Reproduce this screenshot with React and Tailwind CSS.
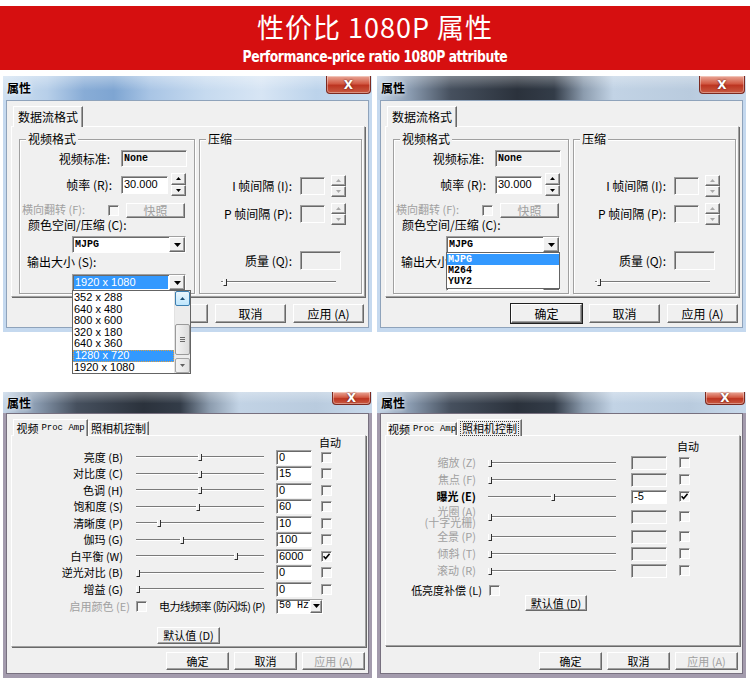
import React from 'react';

// shared font stacks and classic 3D edge styles
const cjk = "font-['Noto_Sans_CJK_SC',sans-serif]";
const mono = "font-['Liberation_Mono',monospace]";
const sans = "font-['Liberation_Sans',sans-serif]";

const raised =
  'border border-t-white border-l-white border-r-[#696969] border-b-[#696969] shadow-[inset_-1px_-1px_0_#a0a0a0] bg-[#f0f0f0]';
const sunken =
  'border border-t-[#a0a0a0] border-l-[#a0a0a0] border-r-white border-b-white shadow-[inset_1px_1px_0_#696969]';

const glassLight =
  'bg-[linear-gradient(180deg,rgba(255,255,255,0.35),rgba(255,255,255,0)_60%),linear-gradient(90deg,#cfe0f1_0%,#b7cfe9_12%,#88acd6_22%,#7ea5d2_30%,#a9c5e5_40%,#c6daef_55%,#d7e5f4_70%,#bcd3eb_85%,#c8dcf0_100%)]';
const glassDark =
  'bg-[linear-gradient(180deg,rgba(255,255,255,0.3),rgba(255,255,255,0)_55%),linear-gradient(90deg,#c5d6e8_0%,#8a9bb0_9%,#46505e_20%,#2b323c_38%,#333c48_48%,#8c9cae_56%,#c2d3e5_64%,#b9cbde_85%,#c8d9eb_100%)]';

function Tri({ up, color = '#000000', w = 7, h = 4 }) {
  const pts = up ? `0,${h} ${w},${h} ${w / 2},0` : `0,0 ${w},0 ${w / 2},${h}`;
  return (
    <svg width={w} height={h} viewBox={`0 0 ${w} ${h}`}>
      <polygon points={pts} fill={color} />
    </svg>
  );
}

function CloseButton({ size }) {
  return (
    <div
      className={`${size} rounded-b-[4px] border border-t-0 border-[#7c2a20] bg-[linear-gradient(#eaa898,#d25a44_45%,#bd3521_55%,#c85a42)] shadow-[inset_0_0_0_1px_rgba(255,255,255,0.35)] flex items-center justify-center`}
    >
      <span className="text-white font-bold text-[12px] leading-none font-['DejaVu_Sans',sans-serif] [text-shadow:0_0_2px_#4a140c]">
        X
      </span>
    </div>
  );
}

function Window({ glass, titleH, closeSize, frame, edge, height, children }) {
  return (
    <div className={`w-[369px] ${height} flex flex-col`}>
      <div className={`${titleH} ${glass} flex items-start justify-between pr-[1px]`}>
        <span className="self-center pl-[4px] text-[12px] leading-none font-bold text-black [text-shadow:0_0_4px_white]">
          属性
        </span>
        <CloseButton size={closeSize} />
      </div>
      <div className={`flex-1 flex flex-col border-x-[3px] border-b-[4px] ${frame}`}>
        <div className={`flex-1 flex flex-col border ${edge} bg-[#f0f0f0]`}>{children}</div>
      </div>
    </div>
  );
}

function Tab({ active, size, children }) {
  return (
    <div
      className={`${size} flex items-center justify-center whitespace-nowrap bg-[#f0f0f0] border-t border-l border-r border-t-white border-l-white border-r-[#696969] shadow-[inset_-1px_0_0_#a0a0a0] ${
        active ? 'relative z-10 -mb-px' : ''
      }`}
    >
      {children}
    </div>
  );
}

const page =
  'border border-t-white border-l-white border-r-[#a0a0a0] border-b-[#a0a0a0] shadow-[1px_1px_0_#696969] bg-[#f0f0f0]';

function Group({ title, size, children }) {
  return (
    <fieldset
      className={`${size} min-w-0 border border-[#a0a0a0] shadow-[inset_1px_1px_0_white,1px_1px_0_white]`}
    >
      <legend className="ml-[6px] px-[2px] h-[12px] leading-[12px] bg-[#f0f0f0]">{title}</legend>
      {children}
    </fieldset>
  );
}

function Btn({ size, disabled, def, children }) {
  return (
    <div
      className={`${size} ${raised} flex items-center justify-center leading-none ${
        def ? 'outline outline-1 outline-[#202020]' : ''
      } ${disabled ? 'text-[#a0a0a0]' : 'text-black'}`}
    >
      {children}
    </div>
  );
}

function Check({ checked }) {
  return (
    <div className={`w-[11px] h-[11px] shrink-0 ${sunken} bg-[#f7f7f7] flex items-center justify-center`}>
      {checked && (
        <svg width="7" height="7" viewBox="0 0 7 7">
          <path d="M0.5 3.2 L2.6 5.6 L6.6 0.8" stroke="#000" strokeWidth="1.6" fill="none" />
        </svg>
      )}
    </div>
  );
}

function Spin({ size, disabled }) {
  const c = disabled ? '#a8a8a8' : '#000000';
  return (
    <div className={`${size} flex flex-col`}>
      <div className={`flex-1 ${raised} flex items-center justify-center`}>
        <Tri up color={c} w={5} h={3} />
      </div>
      <div className={`flex-1 ${raised} flex items-center justify-center`}>
        <Tri color={c} w={5} h={3} />
      </div>
    </div>
  );
}

function Slider({ size, pos }) {
  return (
    <div className={`relative ${size} flex items-center`}>
      <div className="w-full h-[2px] border-t border-b border-t-[#7a7a7a] border-b-white" />
      <div
        className="absolute top-[1px] w-[4px] h-[7px] border-l border-r border-b border-l-white border-r-[#303030] border-b-[#303030] bg-[#f0f0f0]"
        style={{ left: pos }}
      />
    </div>
  );
}

function Combo({ size, text, textCls, selected, btnW = 'w-[16px]', children }) {
  return (
    <div className={`relative ${size} ${sunken} bg-white flex`}>
      <div className="flex-1 flex p-[1px]">
        <div
          className={`w-full flex items-center pl-[1px] whitespace-pre ${textCls} ${
            selected ? 'bg-[#3399ff] text-white' : 'text-black'
          }`}
        >
          {text}
        </div>
      </div>
      <div className={`${btnW} ${raised} flex items-center justify-center`}>
        <Tri />
      </div>
      {children}
    </div>
  );
}

const sizes = ['352 x 288', '640 x 480', '800 x 600', '320 x 180', '640 x 360', '1280 x 720', '1920 x 1080'];

function SizeList() {
  return (
    <div className="absolute left-[-1px] top-full z-20 w-[119px] h-[84px] bg-white border border-[#646464] flex">
      <div className="flex-1 flex flex-col pt-[1px]">
        {sizes.map((s) => (
          <div
            key={s}
            className={`h-[12px] flex items-center pl-[1px] whitespace-pre ${sans} text-[11px] leading-none ${
              s === '1280 x 720'
                ? 'bg-[#3399ff] text-white border border-dotted border-[#e0a040]'
                : 'text-black'
            }`}
          >
            {s}
          </div>
        ))}
      </div>
      <div className="w-[16px] flex flex-col bg-[#ececec] border-l border-[#e2e2e2]">
        <div className="h-[15px] rounded-[2px] border border-[#3c7fb1] bg-[linear-gradient(#eaf6fd,#bee6fd)] flex items-center justify-center">
          <Tri up color="#1c4f75" w={5} h={3} />
        </div>
        <div className="h-[18px]" />
        <div className="h-[31px] rounded-[2px] border border-[#9a9a9a] bg-[linear-gradient(90deg,#f4f4f4,#dcdcdc)] flex items-center justify-center">
          <div className="flex flex-col gap-[1px]">
            <div className="w-[5px] h-px bg-[#6a6a6a]" />
            <div className="w-[5px] h-px bg-[#6a6a6a]" />
            <div className="w-[5px] h-px bg-[#6a6a6a]" />
          </div>
        </div>
        <div className="h-[3px]" />
        <div className="h-[15px] rounded-[2px] border border-[#a5a5a5] bg-[linear-gradient(90deg,#f4f4f4,#e0e0e0)] flex items-center justify-center">
          <Tri color="#606060" w={5} h={3} />
        </div>
      </div>
    </div>
  );
}

function CodecList() {
  return (
    <div className="absolute left-[-1px] top-full z-20 w-[114px] h-[37px] bg-white border border-[#646464] flex flex-col pt-[1px]">
      {['MJPG', 'M264', 'YUY2'].map((c) => (
        <div
          key={c}
          className={`h-[11.5px] flex items-center pl-[1px] ${mono} text-[10px] font-bold leading-none ${
            c === 'MJPG' ? 'bg-[#3399ff] text-white' : 'text-black'
          }`}
        >
          {c}
        </div>
      ))}
    </div>
  );
}

function StreamDialog({ glass, closeSize, open }) {
  const codecOpen = open === 'codec';
  return (
    <Window
      glass={glass}
      titleH="h-[24px]"
      closeSize={closeSize}
      frame="border-[#c5d9ef]"
      edge="border-[#8fa3bb]"
      height="h-[256px]"
    >
      <div className="flex flex-col pl-[4px] pt-[5px] text-[12px] leading-none">
        <div className="flex items-end h-[20px] pl-[2px]">
          <Tab active size="w-[70px] h-[21px]">
            数据流格式
          </Tab>
        </div>
        <div className={`${page} w-[354px] h-[171px] flex gap-[4px] pl-[7px] pt-[6px]`}>
          <Group title="视频格式" size="w-[176px] h-[161px]">
            <div className="flex flex-col">
              <div className="flex items-center h-[17px] mt-[5px]">
                <span className="w-[90px] text-right">视频标准:</span>
                <div
                  className={`ml-[11px] w-[66px] h-[17px] ${sunken} bg-[#f0f0f0] flex items-center pl-[2px] ${mono} text-[10px] font-bold`}
                >
                  None
                </div>
              </div>
              <div className="flex items-center h-[23px] mt-[6px]">
                <span className="w-[92px] text-right">帧率 (R):</span>
                <div
                  className={`ml-[9px] w-[47px] h-[18px] ${sunken} bg-white flex items-center pl-[2px] ${sans} text-[11px]`}
                >
                  30.000
                </div>
                <Spin size="ml-[3px] w-[15px] h-[23px]" />
              </div>
              <div className="flex items-start h-[15px] mt-[7px]">
                <span className="pl-[2px] w-[86px] h-[12px] whitespace-nowrap text-[11px] leading-[12px] text-[#a0a0a0]">
                  横向翻转 (F):
                </span>
                <div className="ml-[2px] mt-[2px]">
                  <Check />
                </div>
                <Btn size="ml-[7px] w-[59px] h-[15px]" disabled>
                  快照
                </Btn>
              </div>
              <div className="mt-[1px] h-[12px] pl-[8px] whitespace-nowrap">颜色空间/压缩 (C):</div>
              <div className="mt-[5px] pl-[52px]">
                <Combo size="w-[114px] h-[17px]" text="MJPG" textCls={`${mono} text-[10px] font-bold`}>
                  {codecOpen && <CodecList />}
                </Combo>
              </div>
              <div className="mt-[3px] h-[12px] pl-[7px] whitespace-nowrap">
                {codecOpen ? '输出大小' : '输出大小 (S):'}
              </div>
              <div className="mt-[6px] pl-[52px]">
                <Combo
                  size="w-[114px] h-[17px]"
                  text={codecOpen ? '' : '1920 x 1080'}
                  textCls={`${sans} text-[11px]`}
                  selected={open === 'size'}
                >
                  {open === 'size' && <SizeList />}
                </Combo>
              </div>
            </div>
          </Group>
          <Group title="压缩" size="w-[163px] h-[161px]">
            <div className="flex flex-col">
              {['I 帧间隔 (I):', 'P 帧间隔 (P):'].map((t, i) => (
                <div key={t} className={`flex items-center h-[22px] ${i === 0 ? 'mt-[30px]' : 'mt-[6px]'}`}>
                  <span className="ml-[20px] w-[72px] text-right whitespace-nowrap">{t}</span>
                  <div className={`ml-[8px] w-[25px] h-[18px] ${sunken} bg-[#f0f0f0]`} />
                  <Spin size="ml-[6px] w-[15px] h-[22px]" disabled />
                </div>
              ))}
              <div className="flex items-center h-[19px] mt-[26px]">
                <span className="ml-[20px] w-[72px] text-right whitespace-nowrap">质量 (Q):</span>
                <div className={`ml-[8px] w-[41px] h-[19px] ${sunken} bg-[#f0f0f0]`} />
              </div>
              <div className="mt-[8px] pl-[21px]">
                <Slider size="w-[115px] h-[8px]" pos={2} />
              </div>
            </div>
          </Group>
        </div>
        <div className="w-[354px] flex justify-end gap-[7px] pr-[1px] mt-[7px]">
          <Btn size="w-[71px] h-[19px]" def={codecOpen}>
            确定
          </Btn>
          <Btn size="w-[71px] h-[19px]">取消</Btn>
          <Btn size="w-[71px] h-[19px]">应用 (A)</Btn>
        </div>
      </div>
    </Window>
  );
}

const procRows = [
  { label: '亮度 (B)', pos: 62, value: '0' },
  { label: '对比度 (C)', pos: 62, value: '15' },
  { label: '色调 (H)', pos: 62, value: '0' },
  { label: '饱和度 (S)', pos: 60, value: '60' },
  { label: '清晰度 (P)', pos: 21, value: '10' },
  { label: '伽玛 (G)', pos: 44, value: '100' },
  { label: '白平衡 (W)', pos: 98, value: '6000', checked: true },
  { label: '逆光对比 (B)', pos: 0, value: '0' },
  { label: '增益 (G)', pos: 0, value: '0' },
];

function ProcAmpDialog() {
  return (
    <Window
      glass={glassDark}
      titleH="h-[21px]"
      closeSize="w-[39px] h-[13px]"
      frame="border-[#a39bad]"
      edge="border-[#77707f]"
      height="h-[286px]"
    >
      <div className="flex flex-col pl-[4px] pt-[5px] text-[11px] leading-none">
        <div className="flex items-end h-[16px] pl-[2px]">
          <Tab active size="w-[75px] h-[17px]">
            视频 <span className={`${mono} text-[9px] ml-[3px]`}>Proc Amp</span>
          </Tab>
          <Tab size="w-[61px] h-[14px]">照相机控制</Tab>
        </div>
        <div className={`${page} w-[355px] h-[212px] flex flex-col`}>
          <div className="mt-[1px] h-[12px] pl-[307px]">自动</div>
          {procRows.map((r) => (
            <div key={r.label} className="h-[16.5px] flex items-center">
              <span className="w-[111px] text-right whitespace-nowrap">{r.label}</span>
              <Slider size="ml-[13px] w-[128px] h-[8px]" pos={r.pos} />
              <div
                className={`ml-[12px] w-[36px] h-[15px] ${sunken} bg-white flex items-center pl-[2px] ${sans} text-[11px]`}
              >
                {r.value}
              </div>
              <div className="ml-[9px]">
                <Check checked={r.checked} />
              </div>
            </div>
          ))}
          <div className="h-[17px] flex items-center">
            <span className="w-[118px] text-right whitespace-nowrap text-[#a0a0a0]">启用颜色 (E)</span>
            <div className="ml-[6px]">
              <Check />
            </div>
            <span className="ml-[12px] w-[117px] whitespace-nowrap tracking-[-0.6px]">电力线频率 (防闪烁) (P)</span>
            <Combo size="w-[47px] h-[15px]" text="50 Hz" textCls={`${mono} text-[10px]`} btnW="w-[14px]" />
          </div>
          <div className="mt-[12px] ml-[145px]">
            <Btn size="w-[63px] h-[17px]">默认值 (D)</Btn>
          </div>
        </div>
        <div className="w-[355px] flex justify-end gap-[5px] pr-[1px] mt-[5px]">
          <Btn size="w-[63px] h-[18px]">确定</Btn>
          <Btn size="w-[63px] h-[18px]">取消</Btn>
          <Btn size="w-[63px] h-[18px]" disabled>
            应用 (A)
          </Btn>
        </div>
      </div>
    </Window>
  );
}

const camRows = [
  { label: '缩放 (Z)', pos: 0 },
  { label: '焦点 (F)', pos: 0 },
  { label: '曝光 (E)', pos: 63, value: '-5', checked: true, on: true },
  { label: '光圈 (A)\n(十字光栅)', tall: true, pos: 0 },
  { label: '全景 (P)', pos: 0 },
  { label: '倾斜 (T)', pos: 0 },
  { label: '滚动 (R)', pos: 0 },
];

function CameraDialog() {
  return (
    <Window
      glass={glassDark}
      titleH="h-[21px]"
      closeSize="w-[40px] h-[13px]"
      frame="border-[#a39bad]"
      edge="border-[#77707f]"
      height="h-[286px]"
    >
      <div className="flex flex-col pl-[4px] pt-[5px] text-[11px] leading-none">
        <div className="flex items-end h-[16px] pl-[2px]">
          <Tab size="w-[70px] h-[13px]">
            视频 <span className={`${mono} text-[9px] ml-[3px]`}>Proc Amp</span>
          </Tab>
          <Tab active size="w-[65px] h-[17px]">
            <span className="px-[1px] py-[1px] border border-dotted border-[#404040]">照相机控制</span>
          </Tab>
        </div>
        <div className={`${page} w-[355px] h-[211px] flex flex-col`}>
          <div className="mt-[5px] h-[12px] pl-[291px]">自动</div>
          <div className="mt-[1px]" />
          {camRows.map((r) => (
            <div key={r.label} className={`${r.tall ? 'h-[23px]' : 'h-[17px]'} flex items-center`}>
              <span
                className={`w-[90px] text-right ${
                  r.tall ? 'whitespace-pre-line leading-[11px]' : 'whitespace-nowrap'
                } ${r.on ? 'text-black font-bold' : 'text-[#a0a0a0]'}`}
              >
                {r.label}
              </span>
              <Slider size="ml-[12px] w-[128px] h-[8px]" pos={r.pos} />
              <div
                className={`ml-[15px] w-[36px] h-[14px] ${sunken} ${
                  r.on ? 'bg-white' : 'bg-[#f0f0f0]'
                } flex items-center pl-[2px] ${sans} text-[11px]`}
              >
                {r.value}
              </div>
              <div className="ml-[12px]">
                <Check checked={r.checked} />
              </div>
            </div>
          ))}
          <div className="mt-[4px] h-[14px] flex items-center">
            <span className="w-[96px] text-right whitespace-nowrap">低亮度补偿 (L)</span>
            <div className="ml-[7px]">
              <Check />
            </div>
          </div>
          <div className="-mt-[2px] ml-[139px]">
            <Btn size="w-[62px] h-[16px]">默认值 (D)</Btn>
          </div>
        </div>
        <div className="w-[355px] flex justify-end gap-[5px] pr-[2px] mt-[6px]">
          <Btn size="w-[63px] h-[18px]">确定</Btn>
          <Btn size="w-[63px] h-[18px]">取消</Btn>
          <Btn size="w-[63px] h-[18px]" disabled>
            应用 (A)
          </Btn>
        </div>
      </div>
    </Window>
  );
}

function Header() {
  return (
    <div className="pt-[6px]">
      <div className="h-[64px] bg-[#d60f10] flex flex-col items-center text-white overflow-hidden">
        <div className={`mt-[6px] h-[29px] text-[27px] leading-[29px] tracking-[1px] ${cjk} whitespace-nowrap`}>
          性价比 1080P 属性
        </div>
        <div className="mt-[8px] h-[16px] text-[16px] leading-[16px] font-bold font-['DejaVu_Sans_Condensed','Liberation_Sans',sans-serif] scale-x-[0.86] whitespace-nowrap tracking-[-0.5px]">
          Performance-price ratio 1080P attribute
        </div>
      </div>
    </div>
  );
}

export default function App() {
  return (
    <div className={`w-[750px] h-[684px] bg-white overflow-hidden ${cjk} text-black`}>
      <Header />
      <div className="mt-[6px] flex gap-[5px] pl-[3px]">
        <StreamDialog glass={glassLight} closeSize="w-[45px] h-[18px]" open="size" />
        <StreamDialog glass={glassDark} closeSize="w-[46px] h-[18px]" open="codec" />
      </div>
      <div className="mt-[60px] flex gap-[5px] pl-[3px]">
        <ProcAmpDialog />
        <CameraDialog />
      </div>
    </div>
  );
}
